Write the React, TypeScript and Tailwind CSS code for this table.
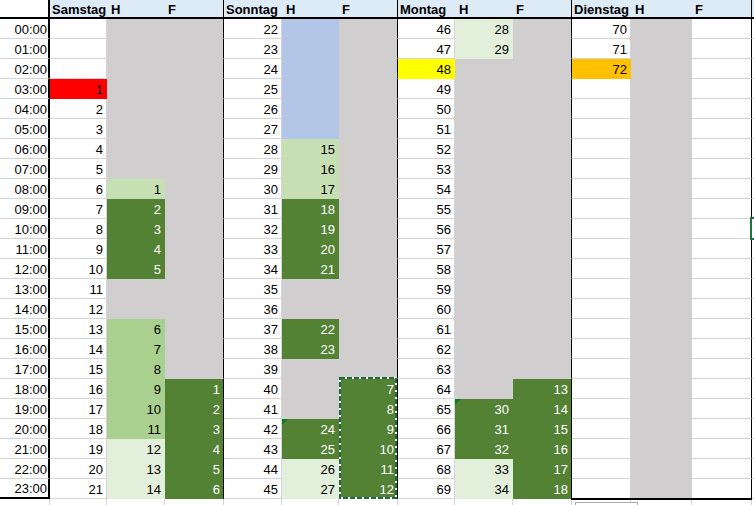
import React from 'react';

type Cell = { v?: number; c: string; tri?: boolean };

// fill + bottom gridline colour per fill key
const FILL: Record<string, string> = {
  w: 'bg-white border-b-[#d4d4d4]',
  g: 'bg-[#d0cece] border-b-[#d0cece]',
  b: 'bg-[#b4c6e7] border-b-[#b4c6e7]',
  l: 'bg-[#e2efda] border-b-[#e2efda]',
  m: 'bg-[#c6e0b4] border-b-[#c6e0b4]',
  a: 'bg-[#a9d08e] border-b-[#a9d08e]',
  d: 'bg-[#548235] border-b-[#548235] text-white',
  y: 'bg-[#ffff00] border-b-[#ffff00]',
  o: 'bg-[#ffc000] border-b-[#ffc000]',
  r: 'bg-[#ff0000] border-b-[#ff0000]',
};

const SIDE: Record<string, string> = {
  w: 'border-r-[#d4d4d4]',
  g: 'border-r-[#d0cece]',
  b: 'border-r-[#b4c6e7]',
  l: 'border-r-[#e2efda]',
  m: 'border-r-[#c6e0b4]',
  a: 'border-r-[#a9d08e]',
  d: 'border-r-[#548235]',
  y: 'border-r-[#ffff00]',
  o: 'border-r-[#ffc000]',
  r: 'border-r-[#ff0000]',
};

const hours = Array.from({ length: 24 }, (_, i) => i);

const col = (f: (r: number) => Cell) => hours.map(f);

const days = [
  {
    name: 'Samstag',
    widths: ['w-[57px]', 'w-[58px]', 'w-[59px]'],
    cols: [
      col((r) => (r < 3 ? { c: 'w' } : { v: r - 2, c: r === 3 ? 'r' : 'w' })),
      col((r) => {
        if (r === 8) return { v: 1, c: 'm' };
        if (r >= 9 && r <= 12) return { v: r - 7, c: 'd' };
        if (r >= 15 && r <= 20) return { v: r - 9, c: 'a' };
        if (r >= 21) return { v: r - 9, c: 'l' };
        return { c: 'g' };
      }),
      col((r) => (r < 18 ? { c: 'g' } : { v: r - 17, c: 'd' })),
    ],
  },
  {
    name: 'Sonntag',
    widths: ['w-[58px]', 'w-[57px]', 'w-[59px]'],
    cols: [
      col((r) => ({ v: 22 + r, c: 'w' })),
      col((r) => {
        if (r <= 5) return { c: 'b' };
        if (r <= 8) return { v: r + 9, c: 'm' };
        if (r <= 12) return { v: r + 9, c: 'd' };
        if (r === 15 || r === 16) return { v: r + 7, c: 'd' };
        if (r === 20 || r === 21) return { v: r + 4, c: 'd', tri: r === 20 };
        if (r >= 22) return { v: r + 4, c: 'l' };
        return { c: 'g' };
      }),
      col((r) => (r < 18 ? { c: 'g' } : { v: r - 11, c: 'd' })),
    ],
  },
  {
    name: 'Montag',
    widths: ['w-[57px]', 'w-[58px]', 'w-[59px]'],
    cols: [
      col((r) => ({ v: 46 + r, c: r === 2 ? 'y' : 'w' })),
      col((r) => {
        if (r <= 1) return { v: 28 + r, c: 'l' };
        if (r >= 19 && r <= 21) return { v: r + 11, c: 'd', tri: r === 19 };
        if (r >= 22) return { v: r + 11, c: 'l' };
        return { c: 'g' };
      }),
      col((r) => (r < 18 ? { c: 'g' } : { v: r - 5, c: 'd' })),
    ],
  },
  {
    name: 'Dienstag',
    widths: ['w-[59px]', 'w-[61px]', 'w-[60px]'],
    cols: [
      col((r) => (r < 3 ? { v: 70 + r, c: r === 2 ? 'o' : 'w' } : { c: 'w' })),
      col(() => ({ c: 'g' })),
      col(() => ({ c: 'w' })),
    ],
  },
];

const GridCell = ({ cell, width, last }: { cell: Cell; width: string; last: boolean }) => (
  <div
    className={`relative flex h-[20px] shrink-0 items-end justify-end border-b border-r pb-[2px] pr-[3px] ${width} ${FILL[cell.c]} ${last ? 'border-r-black' : SIDE[cell.c]}`}
  >
    {cell.tri && (
      <svg className="absolute left-0 top-0" width="6" height="6">
        <polygon points="0,0 6,0 0,6" fill="#0a7d23" />
      </svg>
    )}
    {cell.v}
  </div>
);

export default function App() {
  return (
    <div className="relative h-[505px] w-[754px] overflow-hidden bg-white font-['Liberation_Sans',Arial,sans-serif] text-[13px] leading-[13px] text-black">
      {/* header */}
      <div className="flex h-[19px] border-b-2 border-black font-bold">
        <div className="h-full w-[50px] shrink-0 border-r-2 border-black bg-white" />
        {days.map((d) => (
          <div key={d.name} className="flex bg-[#ddebf7]">
            <div className={`flex h-full items-end pb-[1px] pl-[2px] ${d.widths[0]}`}>{d.name}</div>
            <div className={`flex h-full items-end pb-[1px] pl-[4px] ${d.widths[1]}`}>H</div>
            <div className={`flex h-full items-end border-r border-black pb-[1px] pl-[3px] ${d.widths[2]}`}>F</div>
          </div>
        ))}
        <div className="h-full flex-1 bg-[#ddebf7]" />
      </div>

      {/* hour rows */}
      {hours.map((r) => (
        <div key={r} className="flex">
          <div
            className={`flex h-[20px] w-[50px] shrink-0 items-end justify-end border-r-2 border-r-black pb-[2px] pr-[1px] ${
              r === 23 ? 'border-b-2 border-b-black' : 'border-b border-b-[#d4d4d4]'
            }`}
          >
            {String(r).padStart(2, '0')}:00
          </div>
          {days.map((d) =>
            d.cols.map((c, i) => (
              <GridCell key={`${d.name}-${i}`} cell={c[r]} width={d.widths[i]} last={i === 2} />
            ))
          )}
          <div className="h-[20px] flex-1 border-b border-b-[#d4d4d4]" />
        </div>
      ))}

      {/* row below, cut off */}
      <div className="flex">
        <div className="h-[20px] w-[50px] shrink-0 border-r border-[#d4d4d4]" />
        {days.map((d) =>
          d.widths.map((w, i) => (
            <div key={`${d.name}-e-${i}`} className={`h-[20px] shrink-0 border-r border-[#d4d4d4] ${w}`} />
          ))
        )}
      </div>

      {/* bottom black line under Dienstag block */}
      <div className="absolute left-[571px] top-[498px] h-[2px] w-[181px] bg-black" />

      {/* copy marquee around Sonntag F */}
      <svg className="absolute left-[339px] top-[377px]" width="58" height="122">
        <rect x="1" y="1" width="56" height="120" fill="none" stroke="#ffffff" strokeWidth="2" />
        <rect x="1" y="1" width="56" height="120" fill="none" stroke="#1f6b3f" strokeWidth="2" strokeDasharray="5 2" />
      </svg>

      {/* active cell edge on the right */}
      <div className="absolute left-[750px] top-[217px] h-[23px] w-[4px] border-y-2 border-l-2 border-[#217346]" />

      {/* autofill options button */}
      <div className="absolute left-[575px] top-[502px] h-[20px] w-[63px] border border-[#ababab] bg-white" />
    </div>
  );
}
